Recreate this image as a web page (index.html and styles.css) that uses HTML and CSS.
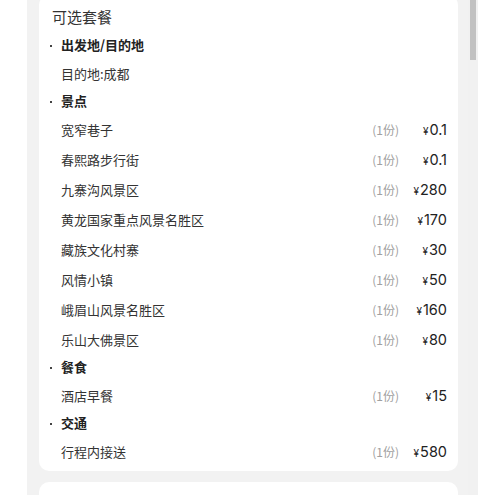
FILE: index.html
```html
<!DOCTYPE html>
<html lang="zh">
<head>
<meta charset="utf-8">
<link rel="stylesheet" href="styles.css">
</head>
<body>
<div class="frame">
  <div class="panel">
    <div class="cards">
      <section class="card">
        <h2 class="title">可选套餐</h2>
        <div class="group"><span class="dot"></span><span>出发地/目的地</span></div>
        <div class="row"><span class="name">目的地:成都</span></div>
        <div class="group"><span class="dot"></span><span>景点</span></div>
        <div class="row"><span class="name">宽窄巷子</span><span class="qty">(1份)</span><span class="price"><i>¥</i>0.1</span></div>
        <div class="row"><span class="name">春熙路步行街</span><span class="qty">(1份)</span><span class="price"><i>¥</i>0.1</span></div>
        <div class="row"><span class="name">九寨沟风景区</span><span class="qty">(1份)</span><span class="price"><i>¥</i>280</span></div>
        <div class="row"><span class="name">黄龙国家重点风景名胜区</span><span class="qty">(1份)</span><span class="price"><i>¥</i>170</span></div>
        <div class="row"><span class="name">藏族文化村寨</span><span class="qty">(1份)</span><span class="price"><i>¥</i>30</span></div>
        <div class="row"><span class="name">风情小镇</span><span class="qty">(1份)</span><span class="price"><i>¥</i>50</span></div>
        <div class="row"><span class="name">峨眉山风景名胜区</span><span class="qty">(1份)</span><span class="price"><i>¥</i>160</span></div>
        <div class="row"><span class="name">乐山大佛景区</span><span class="qty">(1份)</span><span class="price"><i>¥</i>80</span></div>
        <div class="group"><span class="dot"></span><span>餐食</span></div>
        <div class="row"><span class="name">酒店早餐</span><span class="qty">(1份)</span><span class="price"><i>¥</i>15</span></div>
        <div class="group"><span class="dot"></span><span>交通</span></div>
        <div class="row"><span class="name">行程内接送</span><span class="qty">(1份)</span><span class="price"><i>¥</i>580</span></div>
      </section>
      <section class="card card-next"></section>
    </div>
  </div>
  <div class="scrollbar"><div class="thumb"></div></div>
</div>
</body>
</html>
```

FILE: styles.css
```css
html, body {
  margin: 0;
  padding: 0;
  background: #ffffff;
  height: 495px;
  overflow: hidden;
}
body {
  font-family: "Noto Sans CJK SC", "Noto Sans", sans-serif;
  color: #333;
}
.frame {
  display: flex;
  margin-left: 27px;
  width: 451px;
  height: 495px;
  overflow: hidden;
}
.panel {
  flex: 1;
  background: #f2f2f2;
  padding: 0 10px 0 12px;
  overflow: hidden;
}
.cards {
  margin-top: -5px;
  display: flex;
  flex-direction: column;
  gap: 11px;
}
.card {
  background: #fff;
  border-radius: 10px;
  padding: 11px 11px 5px 12px;
}
.card-next {
  height: 60px;
}
.title {
  margin: 0 0 4px 1px;
  font-size: 15px;
  font-weight: 400;
  line-height: 22px;
  color: #333;
}
.group {
  display: flex;
  align-items: center;
  height: 26px;
  line-height: 26px;
  font-size: 13px;
  font-weight: 700;
  color: #222;
}
.dot {
  width: 2px;
  height: 2px;
  background: #444;
  margin-left: -1px;
  margin-right: 9px;
  margin-top: 1px;
}
.row {
  display: flex;
  align-items: center;
  height: 30px;
  padding-top: 1px;
  box-sizing: border-box;
  padding-left: 10px;
}
.name {
  flex: 1;
  font-size: 13px;
  color: #333;
}
.qty {
  font-size: 12px;
  color: #a0a0a0;
  margin-right: 8px;
}
.price {
  min-width: 40px;
  text-align: right;
  font-family: "Inter", "Roboto", sans-serif;
  font-size: 14.5px;
  font-weight: 400;
  color: #222;
}
.price i {
  font-style: normal;
  font-size: 10px;
  margin-right: 1px;
}
.scrollbar {
  width: 10px;
  background: #f1f1f1;
  display: flex;
  justify-content: center;
}
.thumb {
  width: 6px;
  height: 60px;
  background: #c1c1c1;
}
```
